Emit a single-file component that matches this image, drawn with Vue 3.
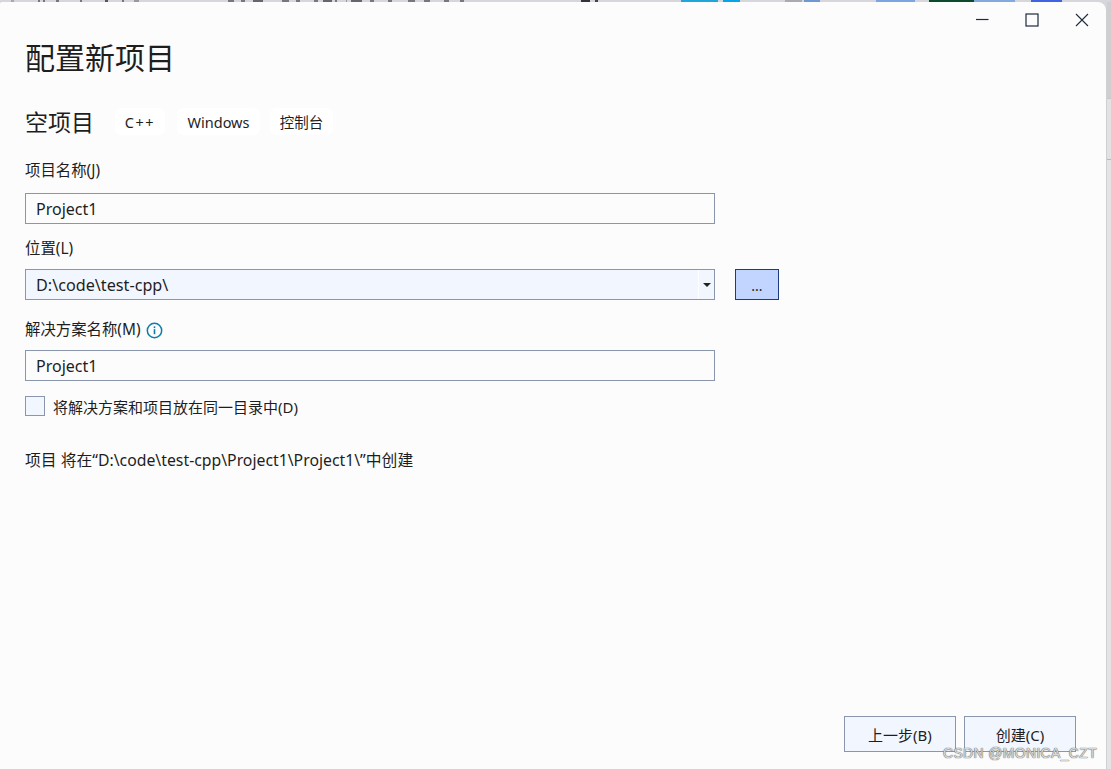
<template>
  <div class="page">
    <div class="back-strip">
      <span v-for="(s, i) in stripParts" :key="i" :style="{ width: s.w + 'px', marginLeft: s.gap + 'px', background: s.c }"></span>
    </div>
    <div class="main">
      <div class="dialog">
        <div class="title-bar">
          <button class="win-btn">
            <svg width="14" height="14" viewBox="0 0 14 14"><path d="M1 6.5h12.5" stroke="#1f2a3d" stroke-width="1.2" fill="none" /></svg>
          </button>
          <button class="win-btn">
            <svg width="14" height="14" viewBox="0 0 14 14"><rect x="1" y="1" width="12" height="12" stroke="#1f2a3d" stroke-width="1.2" fill="none" /></svg>
          </button>
          <button class="win-btn">
            <svg width="14" height="14" viewBox="0 0 14 14"><path d="M1 1l12 12M13 1L1 13" stroke="#1f2a3d" stroke-width="1.1" fill="none" /></svg>
          </button>
        </div>

        <div class="content">
          <h1>配置新项目</h1>
          <div class="template-row">
            <h2>空项目</h2>
            <span class="tag tag-cpp">C++</span>
            <span class="tag tag-win">Windows</span>
            <span class="tag tag-con">控制台</span>
          </div>

          <label class="field-label first">项目名称(J)</label>
          <input class="text-input" type="text" value="Project1" />

          <label class="field-label">位置(L)</label>
          <div class="location-row">
            <div class="combo">
              <span class="combo-text">D:\code\test-cpp\</span>
              <span class="combo-arrow"><i></i></span>
            </div>
            <button class="browse">...</button>
          </div>

          <label class="field-label with-icon">
            解决方案名称(M)
            <svg class="info" width="17" height="17" viewBox="0 0 17 17">
              <circle cx="8.5" cy="8.5" r="7.2" fill="none" stroke="#0f7da6" stroke-width="1.5" />
              <rect x="7.7" y="7.2" width="1.6" height="5" fill="#0f7da6" />
              <rect x="7.7" y="4.4" width="1.6" height="1.7" fill="#0f7da6" />
            </svg>
          </label>
          <input class="text-input" type="text" value="Project1" />

          <div class="check-row">
            <span class="checkbox"></span>
            <span>将解决方案和项目放在同一目录中(D)</span>
          </div>

          <p class="path-note">项目 将在“D:\code\test-cpp\Project1\Project1\”中创建</p>
        </div>

        <div class="footer">
          <button class="action">上一步(B)</button>
          <button class="action">创建(C)</button>
        </div>
      </div>
      <div class="back-side">
        <span class="side-a"></span>
        <span class="side-b"></span>
        <span class="side-c"></span>
      </div>
    </div>
    <div class="watermark">CSDN @MONICA_CZT</div>
  </div>
</template>

<script setup>
// bits of the window behind the dialog: [from, to, colour]
const stripBits = [
  [11, 14, "#a8a8ae"], [38, 40, "#77777c"], [43, 45, "#77777c"], [56, 59, "#77777c"],
  [80, 82, "#77777c"], [105, 108, "#55555a"], [122, 124, "#77777c"], [134, 139, "#99999e"],
  [228, 234, "#77777c"], [241, 245, "#77777c"], [253, 263, "#66666b"], [282, 289, "#77777c"],
  [296, 300, "#77777c"], [314, 318, "#77777c"], [323, 332, "#66666b"], [335, 337, "#77777c"],
  [346, 347, "#99999e"], [351, 362, "#66666b"], [370, 374, "#77777c"], [388, 392, "#77777c"],
  [408, 415, "#77777c"], [424, 430, "#77777c"], [444, 449, "#77777c"], [460, 464, "#77777c"],
  [581, 590, "#333338"], [595, 598, "#444449"], [681, 718, "#21a6dc"], [723, 740, "#06a6e4"],
  [785, 802, "#aaaab0"], [804, 820, "#6f97d2"], [876, 915, "#7ca4e0"], [929, 974, "#0b4a2c"],
  [974, 1015, "#84a9de"], [1031, 1062, "#3f63e0"],
];

let last = 0;
const stripParts = stripBits.map(([from, to, c]) => {
  const part = { gap: from - last, w: to - from, c };
  last = to;
  return part;
});
</script>

<style scoped>
.page {
  position: relative;
  width: 1111px;
  height: 769px;
  display: flex;
  flex-direction: column;
  overflow: hidden;
  background: #d6d6dc;
  color: #1e1e1e;
  font-family: "Noto Sans", "Noto Sans CJK SC", sans-serif;
  font-size: 15px;
}
.back-strip {
  display: flex;
  height: 2px;
  flex: none;
}
.back-strip span {
  flex: none;
  display: block;
}
.main {
  flex: 1;
  display: flex;
  min-height: 0;
}
.dialog {
  width: 1106px;
  flex: none;
  display: flex;
  flex-direction: column;
  background: #fcfcfd;
  border-top-right-radius: 8px;
  border-top-left-radius: 2px;
  box-shadow: 1px 0 0 #cfcfd6;
}
.back-side {
  flex: 1;
  display: flex;
  flex-direction: column;
  margin-left: 1px;
}
.side-a {
  height: 96px;
  background: #cfcfcf;
}
.side-b {
  height: 60px;
  background: #e2e2e2;
  border-top: 1px solid #c8c8c8;
  border-bottom: 1px solid #b8b8b8;
}
.side-c {
  flex: 1;
  background: #e4e4e4;
}

.title-bar {
  box-sizing: border-box;
  display: flex;
  justify-content: flex-end;
  height: 34px;
  padding: 2px 17px 0 0;
  gap: 36px;
  align-items: center;
  flex: none;
}
.win-btn {
  width: 14px;
  height: 14px;
  padding: 0;
  border: none;
  background: transparent;
  display: block;
}
.win-btn svg {
  display: block;
}

.content {
  flex: 1;
  padding-left: 25px;
  display: flex;
  flex-direction: column;
  align-items: flex-start;
}
h1 {
  margin: 0;
  font-size: 30px;
  font-weight: 400;
  line-height: 44px;
  height: 44px;
}
.template-row {
  display: flex;
  align-items: center;
  height: 27px;
  margin-top: 28px;
}
h2 {
  margin: 0 21px 0 0;
  font-size: 23px;
  font-weight: 400;
  line-height: 29px;
  height: 27px;
}
.tag {
  height: 27px;
  line-height: 29px;
  font-size: 14.5px;
  background: #fff;
  border-radius: 6px;
  text-align: center;
  flex: none;
}
.tag-cpp { width: 50px; margin-right: 12px; letter-spacing: 1.5px; }
.tag-win { width: 83px; margin-right: 10px; }
.tag-con { width: 63px; }

.field-label {
  display: block;
  height: 20px;
  line-height: 20px;
  font-size: 15.4px;
  margin-top: 15px;
  margin-bottom: 10px;
}
.field-label.first {
  margin-top: 26px;
  margin-bottom: 12px;
}
.with-icon {
  display: flex;
  align-items: center;
  gap: 5px;
  margin-top: 20px;
  margin-bottom: 10px;
}
.text-input,
.combo {
  box-sizing: border-box;
  width: 690px;
  height: 31px;
  border: 1px solid #8a96ab;
  font: inherit;
  font-size: 16px;
  color: inherit;
  margin: 0;
}
.text-input {
  display: block;
  padding: 0 10px;
  background: #fcfcfd;
  outline: none;
}
.location-row {
  display: flex;
  gap: 20px;
}
.combo {
  display: flex;
  align-items: center;
  background: #f2f6fe;
  padding-left: 10px;
}
.combo-text {
  flex: 1;
  font-size: 16.2px;
}
.combo-arrow {
  width: 15px;
  height: 29px;
  border-left: 1px solid #fff;
  display: flex;
  align-items: center;
  justify-content: center;
}
.combo-arrow i {
  width: 0;
  height: 0;
  border-left: 4px solid transparent;
  border-right: 4px solid transparent;
  border-top: 4px solid #222;
}
.browse {
  box-sizing: border-box;
  width: 44px;
  height: 31px;
  padding: 0;
  border: 1px solid #1f3a7d;
  background: #c2d5fe;
  color: #1e1e1e;
  font: inherit;
  font-size: 14px;
  line-height: 31px;
}
.check-row {
  display: flex;
  align-items: center;
  gap: 8px;
  height: 20px;
  margin-top: 15px;
}
.checkbox {
  box-sizing: border-box;
  width: 20px;
  height: 20px;
  border: 1px solid #8a96ab;
  background: #f2f6fe;
}
.path-note {
  margin: 34px 0 0;
  line-height: 20px;
  font-size: 15.8px;
}
.footer {
  display: flex;
  justify-content: flex-end;
  gap: 8px;
  padding: 0 30px 17px 0;
  flex: none;
}
.action {
  box-sizing: border-box;
  width: 112px;
  height: 36px;
  border: 1px solid #8a96ab;
  background: #f2f6fe;
  color: #1e1e1e;
  font: inherit;
  padding: 0;
}
.watermark {
  position: absolute;
  left: 943px;
  top: 744px;
  font-family: "Liberation Sans", sans-serif;
  font-size: 14px;
  line-height: 18px;
  letter-spacing: 0.33px;
  color: #d8d8d8;
  text-shadow: 0 0 1px #555, 0 0 1px #777;
  white-space: nowrap;
}
</style>
